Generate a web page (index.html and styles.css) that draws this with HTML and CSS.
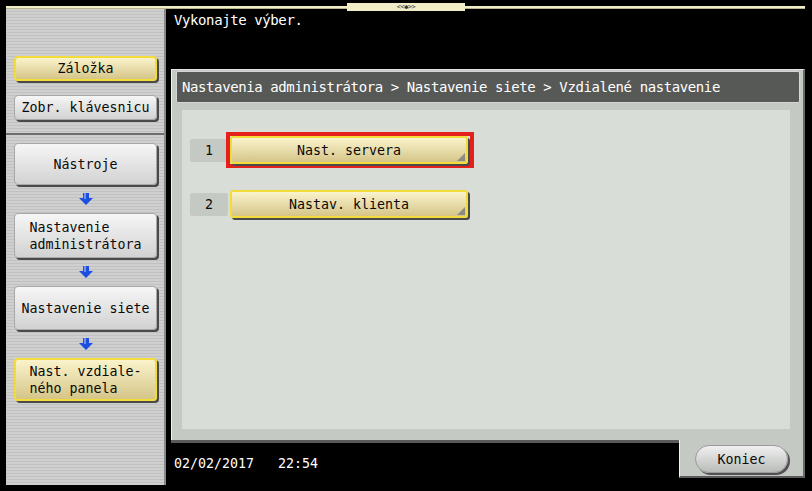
FILE: index.html
```html
<!DOCTYPE html>
<html lang="sk">
<head>
    <meta charset="UTF-8" />
    <title>Nast. vzdialeného panela</title>
    <link rel="stylesheet" href="styles.css">
</head>
<body>
    <div class="screen">
        <div class="topline"></div>
        <div class="handle">&lt;&lt;&#9670;&gt;&gt;</div>

        <div class="layout">
            <aside class="sidebar">
                <div class="side-top">
                    <button class="side-btn yellow short">Záložka</button>
                    <button class="side-btn gray short">Zobr. klávesnicu</button>
                </div>

                <div class="side-flow">
                    <button class="side-btn gray h42">Nástroje</button>
                    <div class="arrow">
                        <svg width="14" height="12" viewBox="0 0 14 12"><path d="M4 0h6v5h4l-7 7-7-7h4z" fill="#1c4fe0"/><path d="M5 0h2v6H5z" fill="#6f93f5"/></svg>
                    </div>
                    <button class="side-btn gray h45"><span>Nastavenie<br>administrátora</span></button>
                    <div class="arrow">
                        <svg width="14" height="12" viewBox="0 0 14 12"><path d="M4 0h6v5h4l-7 7-7-7h4z" fill="#1c4fe0"/><path d="M5 0h2v6H5z" fill="#6f93f5"/></svg>
                    </div>
                    <button class="side-btn gray h44">Nastavenie siete</button>
                    <div class="arrow">
                        <svg width="14" height="12" viewBox="0 0 14 12"><path d="M4 0h6v5h4l-7 7-7-7h4z" fill="#1c4fe0"/><path d="M5 0h2v6H5z" fill="#6f93f5"/></svg>
                    </div>
                    <button class="side-btn yellow h43"><span>Nast. vzdiale-<br>ného panela</span></button>
                </div>
            </aside>

            <main class="main">
                <div class="title">Vykonajte výber.</div>

                <section class="frame">
                    <div class="crumbs">Nastavenia administrátora &gt; Nastavenie siete &gt; Vzdialené nastavenie</div>
                    <div class="content">
                        <div class="row">
                            <div class="num">1</div>
                            <div class="pick">
                                <button class="opt">Nast. servera</button>
                            </div>
                        </div>
                        <div class="row">
                            <div class="num">2</div>
                            <button class="opt">Nastav. klienta</button>
                        </div>
                    </div>
                </section>

                <div class="footer">
                    <div class="clock">02/02/2017   22:54</div>
                    <div class="tab">
                        <button class="close-btn">Koniec</button>
                    </div>
                </div>
            </main>
        </div>
    </div>
</body>
</html>
```

FILE: styles.css
```css
* {
    margin: 0;
    padding: 0;
    box-sizing: border-box;
}

body {
    background: #000;
    font-family: "DejaVu Sans Mono", "Liberation Mono", monospace;
    font-size: 13.3px;
    color: #0a0a0a;
}

button {
    font: inherit;
    color: inherit;
}

.screen {
    position: relative;
    width: 812px;
    height: 491px;
    overflow: hidden;
    background: #000;
}

.topline {
    height: 3px;
    margin: 6px 7px 0 6px;
    background: #f1edc6;
    border-bottom: 1px solid #b8b48c;
}

.handle {
    position: absolute;
    left: 347px;
    top: 3px;
    width: 118px;
    height: 8px;
    background: #f1edc6;
    color: #333;
    font-size: 7px;
    line-height: 8px;
    text-align: center;
    letter-spacing: -0.5px;
}

.layout {
    display: flex;
}

/* left column */

.sidebar {
    width: 160px;
    height: 476px;
    margin-left: 6px;
    background: repeating-linear-gradient(to bottom, #cfcfcf 0 2px, #c1c1c1 2px 3px);
    border-right: 2px solid #8a8a8a;
}

.side-top {
    display: flex;
    flex-direction: column;
    gap: 14px;
    padding: 47px 0 13px 8px;
}

.side-flow {
    display: flex;
    flex-direction: column;
    padding: 8px 0 0 8px;
    border-top: 2px solid #6e6e6e;
}

.side-btn {
    width: 143px;
    display: flex;
    align-items: center;
    justify-content: center;
    text-align: left;
    line-height: 17px;
    border-radius: 4px;
    box-shadow: 2px 2px 0 #4a4a4a;
    cursor: pointer;
}

.side-btn.gray {
    background: linear-gradient(#f6f6f6, #d2d2d2);
    border: 1px solid #a8a8a8;
}

.side-btn.yellow {
    background: linear-gradient(#faf3cc, #d5c588);
    border: 2px solid #f2dc3a;
}

.short { height: 25px; }
.h42 { height: 42px; }
.h43 { height: 43px; }
.h44 { height: 44px; }
.h45 { height: 45px; }

.arrow {
    height: 28px;
    width: 143px;
    display: flex;
    align-items: center;
    justify-content: center;
}

/* main area */

.main {
    width: 646px;
    display: flex;
    flex-direction: column;
}

.title {
    height: 60px;
    padding: 3px 0 0 8px;
    color: #fff;
    font-size: 14px;
    letter-spacing: -0.4px;
}

.frame {
    margin-left: 5px;
    width: 634px;
    height: 371px;
    padding: 1px 3px 0 4px;
    background: #c4c9c4;
    border-left: 1px solid #f2f2f2;
    border-top: 1px solid #e4e4e4;
    border-right: 2px solid #6a6a6a;
}

.crumbs {
    height: 32px;
    padding-left: 5px;
    display: flex;
    align-items: center;
    background: #575957;
    border: 1px solid #d6d6d6;
    border-radius: 2px;
    color: #fff;
    font-size: 14px;
    letter-spacing: -0.4px;
}

.content {
    height: 319px;
    margin: 7px 10px 0 6px;
    padding: 26px 0 0 8px;
    background: #d8ddd8;
    display: flex;
    flex-direction: column;
    gap: 26px;
}

.row {
    display: flex;
    align-items: center;
    gap: 2px;
    height: 28px;
}

.num {
    width: 38px;
    height: 23px;
    background: #c4c9c4;
    border-radius: 2px;
    display: flex;
    align-items: center;
    justify-content: center;
}

.pick {
    display: flex;
    margin: -4px -6px -4px -4px;
    padding: 0 2px 0 0;
    border: 4px solid #e3201b;
}

.opt {
    position: relative;
    width: 238px;
    height: 28px;
    background: linear-gradient(#faf3cc, #d5c588);
    border: 2px solid #f2dc3a;
    border-radius: 3px;
    box-shadow: 2px 2px 0 #4a4a4a;
    cursor: pointer;
}

.opt::after {
    content: "";
    position: absolute;
    right: 1px;
    bottom: 1px;
    border-style: solid;
    border-width: 0 0 8px 8px;
    border-color: transparent transparent #8c8c84 transparent;
}

/* bottom bar */

.footer {
    display: flex;
    margin-left: 5px;
    width: 634px;
}

.clock {
    flex: 1;
    height: 51px;
    padding: 13px 0 0 3px;
    border-top: 3px solid #5a5a5a;
    color: #fff;
    white-space: pre;
}

.tab {
    width: 126px;
    height: 38px;
    padding: 5px 0 0 15px;
    background: #c4c9c4;
    border-left: 1px solid #f2f2f2;
    border-right: 2px solid #6a6a6a;
    border-bottom: 2px solid #5a5a5a;
}

.close-btn {
    width: 93px;
    height: 28px;
    border-radius: 14px;
    background: linear-gradient(#f0f0f0, #b9bcb9);
    border: 1px solid #9a9a9a;
    box-shadow: 2px 2px 0 #505050;
    cursor: pointer;
}
```
